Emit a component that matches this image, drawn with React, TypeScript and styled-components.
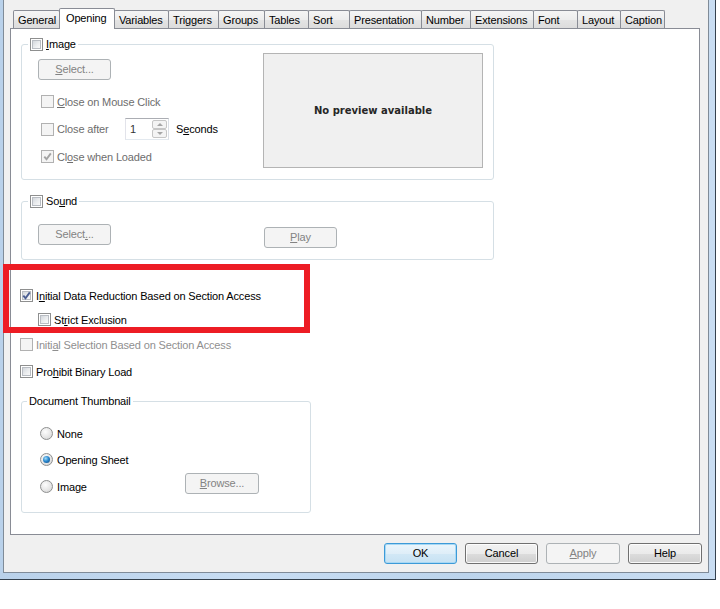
import React from "react";
import styled, { createGlobalStyle } from "styled-components";

const GlobalStyle = createGlobalStyle`
  html, body {
    margin: 0;
    padding: 0;
    background: #ffffff;
  }
  body {
    font-family: "Liberation Sans", Arial, sans-serif;
    font-size: 11px;
    letter-spacing: -0.15px;
    color: #000;
  }
  u {
    text-decoration-thickness: 1px;
    text-underline-offset: 1px;
  }
`;

const Page = styled.div`
  position: relative;
  width: 720px;
  height: 609px;
  background: #fff;
`;

const Frame = styled.div`
  box-sizing: border-box;
  width: 716px;
  height: 580px;
  padding: 0 6px 6px 3px;
  background: linear-gradient(90deg, #b9d1ea 0%, #c8ddf3 35%, #bcd4ec 65%, #c9ddf2 100%);
  border-right: 1px solid #34414e;
  border-bottom: 1px solid #34414e;
`;

const Client = styled.div`
  box-sizing: border-box;
  height: 100%;
  display: flex;
  flex-direction: column;
  align-items: flex-start;
  padding-top: 8px;
  background: #f0f0f0;
  border: 1px solid #7f8b98;
  border-top: none;
`;

const TabStrip = styled.div`
  display: flex;
  align-items: flex-end;
  height: 20px;
  margin-left: 9px;
`;

const Tab = styled.div<{ $w: number; $active?: boolean }>`
  position: relative;
  z-index: ${p => (p.$active ? 2 : 1)};
  box-sizing: border-box;
  width: ${p => p.$w + 1}px;
  height: ${p => (p.$active ? 21 : 18)}px;
  margin-right: -1px;
  margin-bottom: ${p => (p.$active ? -1 : 0)}px;
  padding: 3px 0 0 ${p => (p.$active ? 6 : 4)}px;
  border: 1px solid #898c95;
  border-bottom: none;
  border-radius: 2px 2px 0 0;
  background: ${p =>
    p.$active ? "#ffffff" : "linear-gradient(#f5f5f5, #ededed 50%, #e4e4e4 51%, #dcdcdc)"};
  line-height: 13px;
  white-space: nowrap;
`;

const Panel = styled.div`
  box-sizing: border-box;
  width: 690px;
  height: 507px;
  margin-left: 6px;
  border: 1px solid #898c95;
  background: #fff;
  display: flex;
  flex-direction: column;
  align-items: flex-start;
`;

const Group = styled.fieldset<{ $w: number; $mt: number }>`
  box-sizing: border-box;
  width: ${p => p.$w}px;
  min-width: 0;
  margin: ${p => p.$mt}px 0 0 10px;
  padding: 0;
  border: 1px solid #d5dfe5;
  border-radius: 3px;
`;

const Legend = styled.legend<{ $ml: number }>`
  display: flex;
  align-items: center;
  gap: 3px;
  height: 13px;
  margin-left: ${p => p.$ml}px;
  padding: 0 2px;
  line-height: 13px;
`;

const GroupBody = styled.div<{ $pad: string }>`
  display: flex;
  align-items: flex-start;
  padding: ${p => p.$pad};
`;

const Column = styled.div`
  display: flex;
  flex-direction: column;
  align-items: flex-start;
`;

const Box = styled.span<{ $disabled?: boolean }>`
  position: relative;
  flex: none;
  box-sizing: border-box;
  width: 13px;
  height: 13px;
  border: 1px solid ${p => (p.$disabled ? "#b1b1b1" : "#8e8f8f")};
  background: ${p => (p.$disabled ? "#f4f4f4" : "#ffffff")};
  &::before {
    content: "";
    position: absolute;
    inset: 1px;
    box-sizing: border-box;
    border: 1px solid ${p => (p.$disabled ? "#f4f4f4" : "#b9bdc3")};
    background: ${p =>
      p.$disabled ? "#f4f4f4" : "linear-gradient(135deg, #d3d7dc 0%, #ebedef 55%, #f9f9f9 100%)"};
  }
`;

const CheckMark = styled.svg<{ $disabled?: boolean }>`
  position: absolute;
  left: 0;
  top: 0;
  width: 11px;
  height: 11px;
  fill: none;
  stroke: ${p => (p.$disabled ? "#a3a3a3" : "#4b5e92")};
  stroke-width: 1.9;
`;

const CheckBox = ({ checked, disabled }: { checked?: boolean; disabled?: boolean }) => (
  <Box $disabled={disabled}>
    {checked && (
      <CheckMark $disabled={disabled} viewBox="0 0 11 11">
        <path d="M2.3 5.6 L4.5 8.2 L8.8 2.4" />
      </CheckMark>
    )}
  </Box>
);

const CheckRow = styled.label<{ $mt?: number; $ml?: number; $tone?: "dim" | "faint"; $w?: number }>`
  display: flex;
  align-items: center;
  gap: 3px;
  height: 13px;
  width: ${p => (p.$w ? `${p.$w}px` : "auto")};
  margin-top: ${p => p.$mt ?? 0}px;
  margin-left: ${p => p.$ml ?? 0}px;
  color: ${p => (p.$tone === "dim" ? "#6d6d6d" : p.$tone === "faint" ? "#8f8f8f" : "#000")};
  white-space: nowrap;
`;

const InlineRow = styled.div<{ $mt: number }>`
  display: flex;
  align-items: center;
  margin-top: ${p => p.$mt}px;
`;

const Spin = styled.div`
  box-sizing: border-box;
  display: flex;
  width: 44px;
  height: 22px;
  padding: 1px;
  border: 1px solid #abadb3;
  border-color: #abadb3 #dbdfe6 #e3e9ef #e2e3ea;
  background: #fff;
`;

const SpinValue = styled.span`
  flex: 1;
  padding-left: 3px;
  line-height: 18px;
  color: #333;
`;

const SpinButtons = styled.div`
  display: flex;
  flex-direction: column;
  width: 15px;
`;

const SpinBtn = styled.span<{ $up?: boolean }>`
  flex: 1;
  box-sizing: border-box;
  display: flex;
  align-items: center;
  justify-content: center;
  border: 1px solid #c6c6c6;
  border-radius: 2px;
  background: #f4f4f4;
  &::after {
    content: "";
    border-left: 3px solid transparent;
    border-right: 3px solid transparent;
    ${p => (p.$up ? "border-bottom: 3px solid #a6a6a6;" : "border-top: 3px solid #a6a6a6;")}
  }
`;

const Caption = styled.span<{ $ml: number }>`
  margin-left: ${p => p.$ml}px;
`;

const Preview = styled.div`
  box-sizing: border-box;
  width: 220px;
  height: 115px;
  margin-left: auto;
  display: flex;
  align-items: center;
  justify-content: center;
  border: 1px solid #b4b4b4;
  background: #f0f0f0;
  color: #262626;
  font-family: "DejaVu Sans", Verdana, sans-serif;
  font-weight: bold;
  font-size: 10px;
  letter-spacing: 0;
`;

type Variant = "default" | "normal" | "disabled";

const PushButton = styled.button<{ $w: number; $v: Variant; $mt?: number; $ml?: number }>`
  box-sizing: border-box;
  flex: none;
  width: ${p => p.$w}px;
  height: 21px;
  margin: ${p => p.$mt ?? 0}px 0 0 ${p => p.$ml ?? 0}px;
  padding: 0;
  font: inherit;
  letter-spacing: inherit;
  line-height: 19px;
  border-radius: 3px;
  border: 1px solid
    ${p => (p.$v === "default" ? "#3c9ad8" : p.$v === "normal" ? "#707070" : "#adb2b5")};
  background: ${p =>
    p.$v === "default"
      ? "linear-gradient(#eaf5fc, #dfeef8 50%, #d2e8f6 51%, #c7e2f3)"
      : p.$v === "normal"
      ? "linear-gradient(#f2f2f2, #ebebeb 50%, #dddddd 51%, #cfcfcf)"
      : "#f4f4f4"};
  box-shadow: ${p =>
    p.$v === "disabled"
      ? "none"
      : p.$v === "default"
      ? "inset 0 0 0 1px #a8d8f4"
      : "inset 0 0 0 1px rgba(255,255,255,0.85)"};
  color: ${p => (p.$v === "disabled" ? "#838383" : "#000")};
`;

const Radio = styled.span<{ $on?: boolean }>`
  position: relative;
  flex: none;
  box-sizing: border-box;
  width: 13px;
  height: 13px;
  border-radius: 50%;
  border: 1px solid #8e8f8f;
  background: radial-gradient(circle at 40% 35%, #fdfdfd 0%, #e6e6e6 55%, #cdcdcd 100%);
  &::after {
    content: "";
    display: ${p => (p.$on ? "block" : "none")};
    position: absolute;
    left: 2px;
    top: 2px;
    width: 7px;
    height: 7px;
    border-radius: 50%;
    background: radial-gradient(circle at 38% 35%, #a4dcf8 0%, #2b8ad0 45%, #0d3f78 100%);
  }
`;

const RadioRow = styled.label<{ $mt: number; $w?: number }>`
  display: flex;
  align-items: center;
  gap: 4px;
  height: 13px;
  width: ${p => (p.$w ? `${p.$w}px` : "auto")};
  margin-top: ${p => p.$mt}px;
`;

const ThumbImageRow = styled.div`
  display: flex;
  align-items: flex-start;
  margin-top: 7px;
`;

const ButtonBar = styled.div`
  align-self: stretch;
  display: flex;
  justify-content: flex-end;
  gap: 8px;
  margin-top: 8px;
  padding-right: 6px;
`;

const Highlight = styled.div`
  position: absolute;
  left: 3px;
  top: 264px;
  width: 307px;
  height: 69px;
  box-sizing: border-box;
  border: 6px solid #ed1c24;
  pointer-events: none;
`;

const tabs: [string, number][] = [
  ["General", 46],
  ["Opening", 55],
  ["Variables", 54],
  ["Triggers", 50],
  ["Groups", 46],
  ["Tables", 44],
  ["Sort", 41],
  ["Presentation", 72],
  ["Number", 49],
  ["Extensions", 63],
  ["Font", 44],
  ["Layout", 43],
  ["Caption", 44],
];

export default function App() {
  return (
    <Page>
      <GlobalStyle />
      <Frame>
        <Client>
          <TabStrip>
            {tabs.map(([name, w]) => (
              <Tab key={name} $w={w} $active={name === "Opening"}>
                {name}
              </Tab>
            ))}
          </TabStrip>
          <Panel>
            <Group $w={473} $mt={9}>
              <Legend $ml={6}>
                <CheckBox />
                <span>
                  <u>I</u>mage
                </span>
              </Legend>
              <GroupBody $pad="2px 10px 11px 16px">
                <Column>
                  <PushButton $w={73} $v="disabled" $mt={6}>
                    <u>S</u>elect...
                  </PushButton>
                  <CheckRow $mt={15} $ml={3} $tone="dim">
                    <CheckBox disabled />
                    <span>
                      <u>C</u>lose on Mouse Click
                    </span>
                  </CheckRow>
                  <InlineRow $mt={10}>
                    <CheckRow $ml={3} $w={84} $tone="dim">
                      <CheckBox disabled />
                      <span>Close after</span>
                    </CheckRow>
                    <Spin>
                      <SpinValue>1</SpinValue>
                      <SpinButtons>
                        <SpinBtn $up />
                        <SpinBtn />
                      </SpinButtons>
                    </Spin>
                    <Caption $ml={7}>
                      S<u>e</u>conds
                    </Caption>
                  </InlineRow>
                  <CheckRow $mt={10} $ml={3} $tone="dim">
                    <CheckBox checked disabled />
                    <span>
                      Cl<u>o</u>se when Loaded
                    </span>
                  </CheckRow>
                </Column>
                <Preview>No preview available</Preview>
              </GroupBody>
            </Group>

            <Group $w={473} $mt={15}>
              <Legend $ml={6}>
                <CheckBox />
                <span>
                  So<u>u</u>nd
                </span>
              </Legend>
              <GroupBody $pad="16px 0 11px 16px">
                <PushButton $w={73} $v="disabled">
                  Select<u>.</u>..
                </PushButton>
                <PushButton $w={73} $v="disabled" $mt={3} $ml={153}>
                  <u>P</u>lay
                </PushButton>
              </GroupBody>
            </Group>

            <CheckRow $mt={29} $ml={9}>
              <CheckBox checked />
              <span>
                I<u>n</u>itial Data Reduction Based on Section Access
              </span>
            </CheckRow>
            <CheckRow $mt={11} $ml={27}>
              <CheckBox />
              <span>
                St<u>r</u>ict Exclusion
              </span>
            </CheckRow>
            <CheckRow $mt={12} $ml={9} $tone="faint">
              <CheckBox disabled />
              <span>
                Initi<u>a</u>l Selection Based on Section Access
              </span>
            </CheckRow>
            <CheckRow $mt={14} $ml={9}>
              <CheckBox />
              <span>
                Pro<u>h</u>ibit Binary Load
              </span>
            </CheckRow>

            <Group $w={290} $mt={17}>
              <Legend $ml={5}>Document Thumbnail</Legend>
              <Column style={{ padding: "19px 0 18px 18px" }}>
                <RadioRow $mt={0}>
                  <Radio />
                  <span>None</span>
                </RadioRow>
                <RadioRow $mt={13}>
                  <Radio $on />
                  <span>Opening Sheet</span>
                </RadioRow>
                <ThumbImageRow>
                  <RadioRow $mt={7} $w={145}>
                    <Radio />
                    <span>Image</span>
                  </RadioRow>
                  <PushButton $w={74} $v="disabled">
                    <u>B</u>rowse...
                  </PushButton>
                </ThumbImageRow>
              </Column>
            </Group>
          </Panel>

          <ButtonBar>
            <PushButton $w={73} $v="default">
              OK
            </PushButton>
            <PushButton $w={73} $v="normal">
              Cancel
            </PushButton>
            <PushButton $w={74} $v="disabled">
              <u>A</u>pply
            </PushButton>
            <PushButton $w={74} $v="normal">
              Help
            </PushButton>
          </ButtonBar>
        </Client>
      </Frame>
      <Highlight />
    </Page>
  );
}
